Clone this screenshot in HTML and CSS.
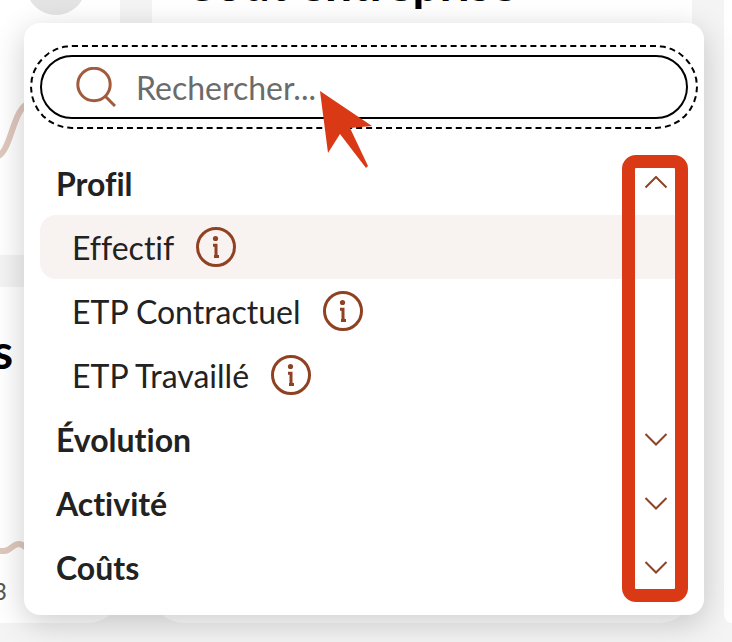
FILE: index.html
```html
<!DOCTYPE html>
<html lang="fr">

<head>
    <title>Indicateurs</title>
    <meta charset="UTF-8" />
    <link rel="stylesheet" href="styles.css">
</head>

<body>
    <main class="dashboard">
        <div class="column column-left">
            <section class="card card-trend">
                <span class="avatar"></span>
                <svg class="curve" width="30" height="64" viewBox="0 0 30 64" aria-hidden="true">
                    <path d="M-4 58C12 54 12 8 30 4" />
                </svg>
            </section>
            <section class="card card-total">
                <h2>s</h2>
                <svg class="curve" width="30" height="24" viewBox="0 0 30 24" aria-hidden="true">
                    <path d="M-4 16H4C11 16 12 9 19 9C24 9 25 13 30 16" />
                </svg>
                <span class="axis">3</span>
            </section>
        </div>
        <section class="card card-main">
            <h2>Coût entreprise</h2>
        </section>
        <section class="card card-right"></section>
    </main>

    <div class="dropdown">
        <form class="search">
            <svg width="40" height="40" viewBox="0 0 40 40" aria-hidden="true">
                <circle cx="18" cy="17.500" r="16.200" />
                <path d="M29 29L39 39" />
            </svg>
            <input type="text" aria-label="Rechercher" placeholder="Rechercher..." />
        </form>
        <div class="groups">
            <button class="group" type="button" aria-expanded="true">
                Profil
                <svg width="24" height="14" viewBox="0 0 24 14"><path d="M1.500 11.500L12 1L22.500 11.500" /></svg>
            </button>
            <ul class="items">
                <li class="item active">
                    <a href="#">Effectif</a>
                    <button class="info" type="button" aria-label="Info Effectif">
                        <svg width="40" height="40" viewBox="0 0 40 40">
                            <circle cx="20" cy="20" r="18.500" />
                            <circle class="dot" cx="19.500" cy="11.500" r="2.600" />
                            <path d="M17 18.200H20V27.500Q20 29.500 23 29.500M18 29.500H23" />
                        </svg>
                    </button>
                </li>
                <li class="item">
                    <a href="#">ETP Contractuel</a>
                    <button class="info" type="button" aria-label="Info ETP Contractuel">
                        <svg width="40" height="40" viewBox="0 0 40 40">
                            <circle cx="20" cy="20" r="18.500" />
                            <circle class="dot" cx="19.500" cy="11.500" r="2.600" />
                            <path d="M17 18.200H20V27.500Q20 29.500 23 29.500M18 29.500H23" />
                        </svg>
                    </button>
                </li>
                <li class="item">
                    <a href="#">ETP Travaillé</a>
                    <button class="info" type="button" aria-label="Info ETP Travaillé">
                        <svg width="40" height="40" viewBox="0 0 40 40">
                            <circle cx="20" cy="20" r="18.500" />
                            <circle class="dot" cx="19.500" cy="11.500" r="2.600" />
                            <path d="M17 18.200H20V27.500Q20 29.500 23 29.500M18 29.500H23" />
                        </svg>
                    </button>
                </li>
            </ul>
            <button class="group" type="button" aria-expanded="false">
                Évolution
                <svg width="24" height="14" viewBox="0 0 24 14"><path d="M1.500 2L12 12.500L22.500 2" /></svg>
            </button>
            <button class="group" type="button" aria-expanded="false">
                Activité
                <svg width="24" height="14" viewBox="0 0 24 14"><path d="M1.500 2L12 12.500L22.500 2" /></svg>
            </button>
            <button class="group" type="button" aria-expanded="false">
                Coûts
                <svg width="24" height="14" viewBox="0 0 24 14"><path d="M1.500 2L12 12.500L22.500 2" /></svg>
            </button>
        </div>
        <div class="highlight"></div>
        <svg class="pointer" width="54" height="78" viewBox="0 0 54 78" aria-hidden="true">
            <path d="M0 0L52 35L30 37L48 75L46 77L20 43L8 62Z" />
        </svg>
    </div>
</body>

</html>
```

FILE: styles.css
```css
* {
    box-sizing: border-box;
}

body {
    margin: 0;
    height: 100vh;
    overflow: hidden;
    position: relative;
    background-color: #f4f4f4;
    color: #222;
    font-family: Lato, sans-serif;
    font-size: 32px;
    font-variant-ligatures: none;
}

h2 {
    margin: 0;
    color: #000;
    font-size: 48px;
    line-height: 56px;
}

/* dashboard behind the menu */
.dashboard {
    display: grid;
    grid-template-columns: 120px 1fr 8px;
    gap: 32px;
    height: 100%;
    padding-bottom: 19px;
}

.column-left {
    display: grid;
    grid-template-rows: 255px 1fr;
    gap: 32px;
    min-height: 0;
}

.card {
    background-color: #fff;
    overflow: hidden;
}

.card-trend,
.card-total {
    display: flex;
    flex-direction: column;
    align-items: flex-start;
    border-bottom-right-radius: 32px;
}

.card-trend {
    justify-content: space-between;
    padding-bottom: 92px;
}

.avatar {
    width: 60px;
    height: 60px;
    margin: -45px 0 0 26px;
    border-radius: 50%;
    background-color: #e4e4e4;
}

.card-total {
    padding-top: 36px;
}

.card-total h2 {
    margin-left: -8px;
}

.card-total .curve {
    margin-top: auto;
}

.curve path {
    fill: none;
    stroke: #dfc8be;
    stroke-width: 6;
}

.axis {
    margin: 18px 0 18px -7px;
    color: #555;
    font-size: 24px;
    line-height: 28px;
}

.card-main {
    padding-left: 32px;
    border-radius: 0 0 32px 32px;
}

.card-main h2 {
    margin-top: -45px;
}

.card-right {
    border-bottom-left-radius: 32px;
}

/* dropdown menu */
.dropdown {
    position: absolute;
    top: 23px;
    left: 24px;
    right: 28px;
    padding: 32px 16px 16px;
    border-radius: 16px;
    background-color: #fff;
    box-shadow: 0 8px 32px rgba(0, 0, 0, 0.2);
}

.search {
    display: flex;
    align-items: center;
    gap: 20px;
    height: 64px;
    padding: 0 34px;
    border: 2px solid #000;
    border-radius: 32px;
    outline: 2px dashed #000;
    outline-offset: 8px;
}

.search svg {
    flex: none;
    fill: none;
    stroke: #a05a3c;
    stroke-width: 3;
}

.search input {
    flex: 1;
    min-width: 0;
    padding: 0;
    border: none;
    outline: none;
    background: none;
    font: inherit;
}

.search input::placeholder {
    color: #6b6b6b;
}

.groups {
    padding-top: 32px;
}

.group {
    display: flex;
    align-items: center;
    justify-content: space-between;
    width: 100%;
    height: 64px;
    padding: 0 20px 0 16px;
    border: none;
    background: none;
    color: inherit;
    font: inherit;
    font-variant-ligatures: none;
    font-weight: bold;
    cursor: pointer;
}

.group svg {
    fill: none;
    stroke: #8f4326;
    stroke-width: 2;
}

.items {
    margin: 0;
    padding: 0;
    list-style: none;
}

.item {
    display: flex;
    align-items: center;
    gap: 22px;
    height: 64px;
    padding: 0 32px;
    border-radius: 16px;
}

.item.active {
    background-color: #f8f3f1;
}

.item a {
    color: inherit;
    text-decoration: none;
}

.info {
    display: flex;
    padding: 0;
    border: none;
    background: none;
    cursor: pointer;
}

.info svg {
    fill: none;
    stroke: #8f4122;
    stroke-width: 3;
}

.info .dot {
    fill: #8f4122;
    stroke: none;
}

/* marks drawn over the menu */
.highlight {
    position: absolute;
    top: 132px;
    right: 16px;
    bottom: 13px;
    width: 66px;
    border: 13px solid #da3916;
    border-radius: 14px;
}

.pointer {
    position: absolute;
    top: 68px;
    left: 296px;
    fill: #da3916;
}
```
